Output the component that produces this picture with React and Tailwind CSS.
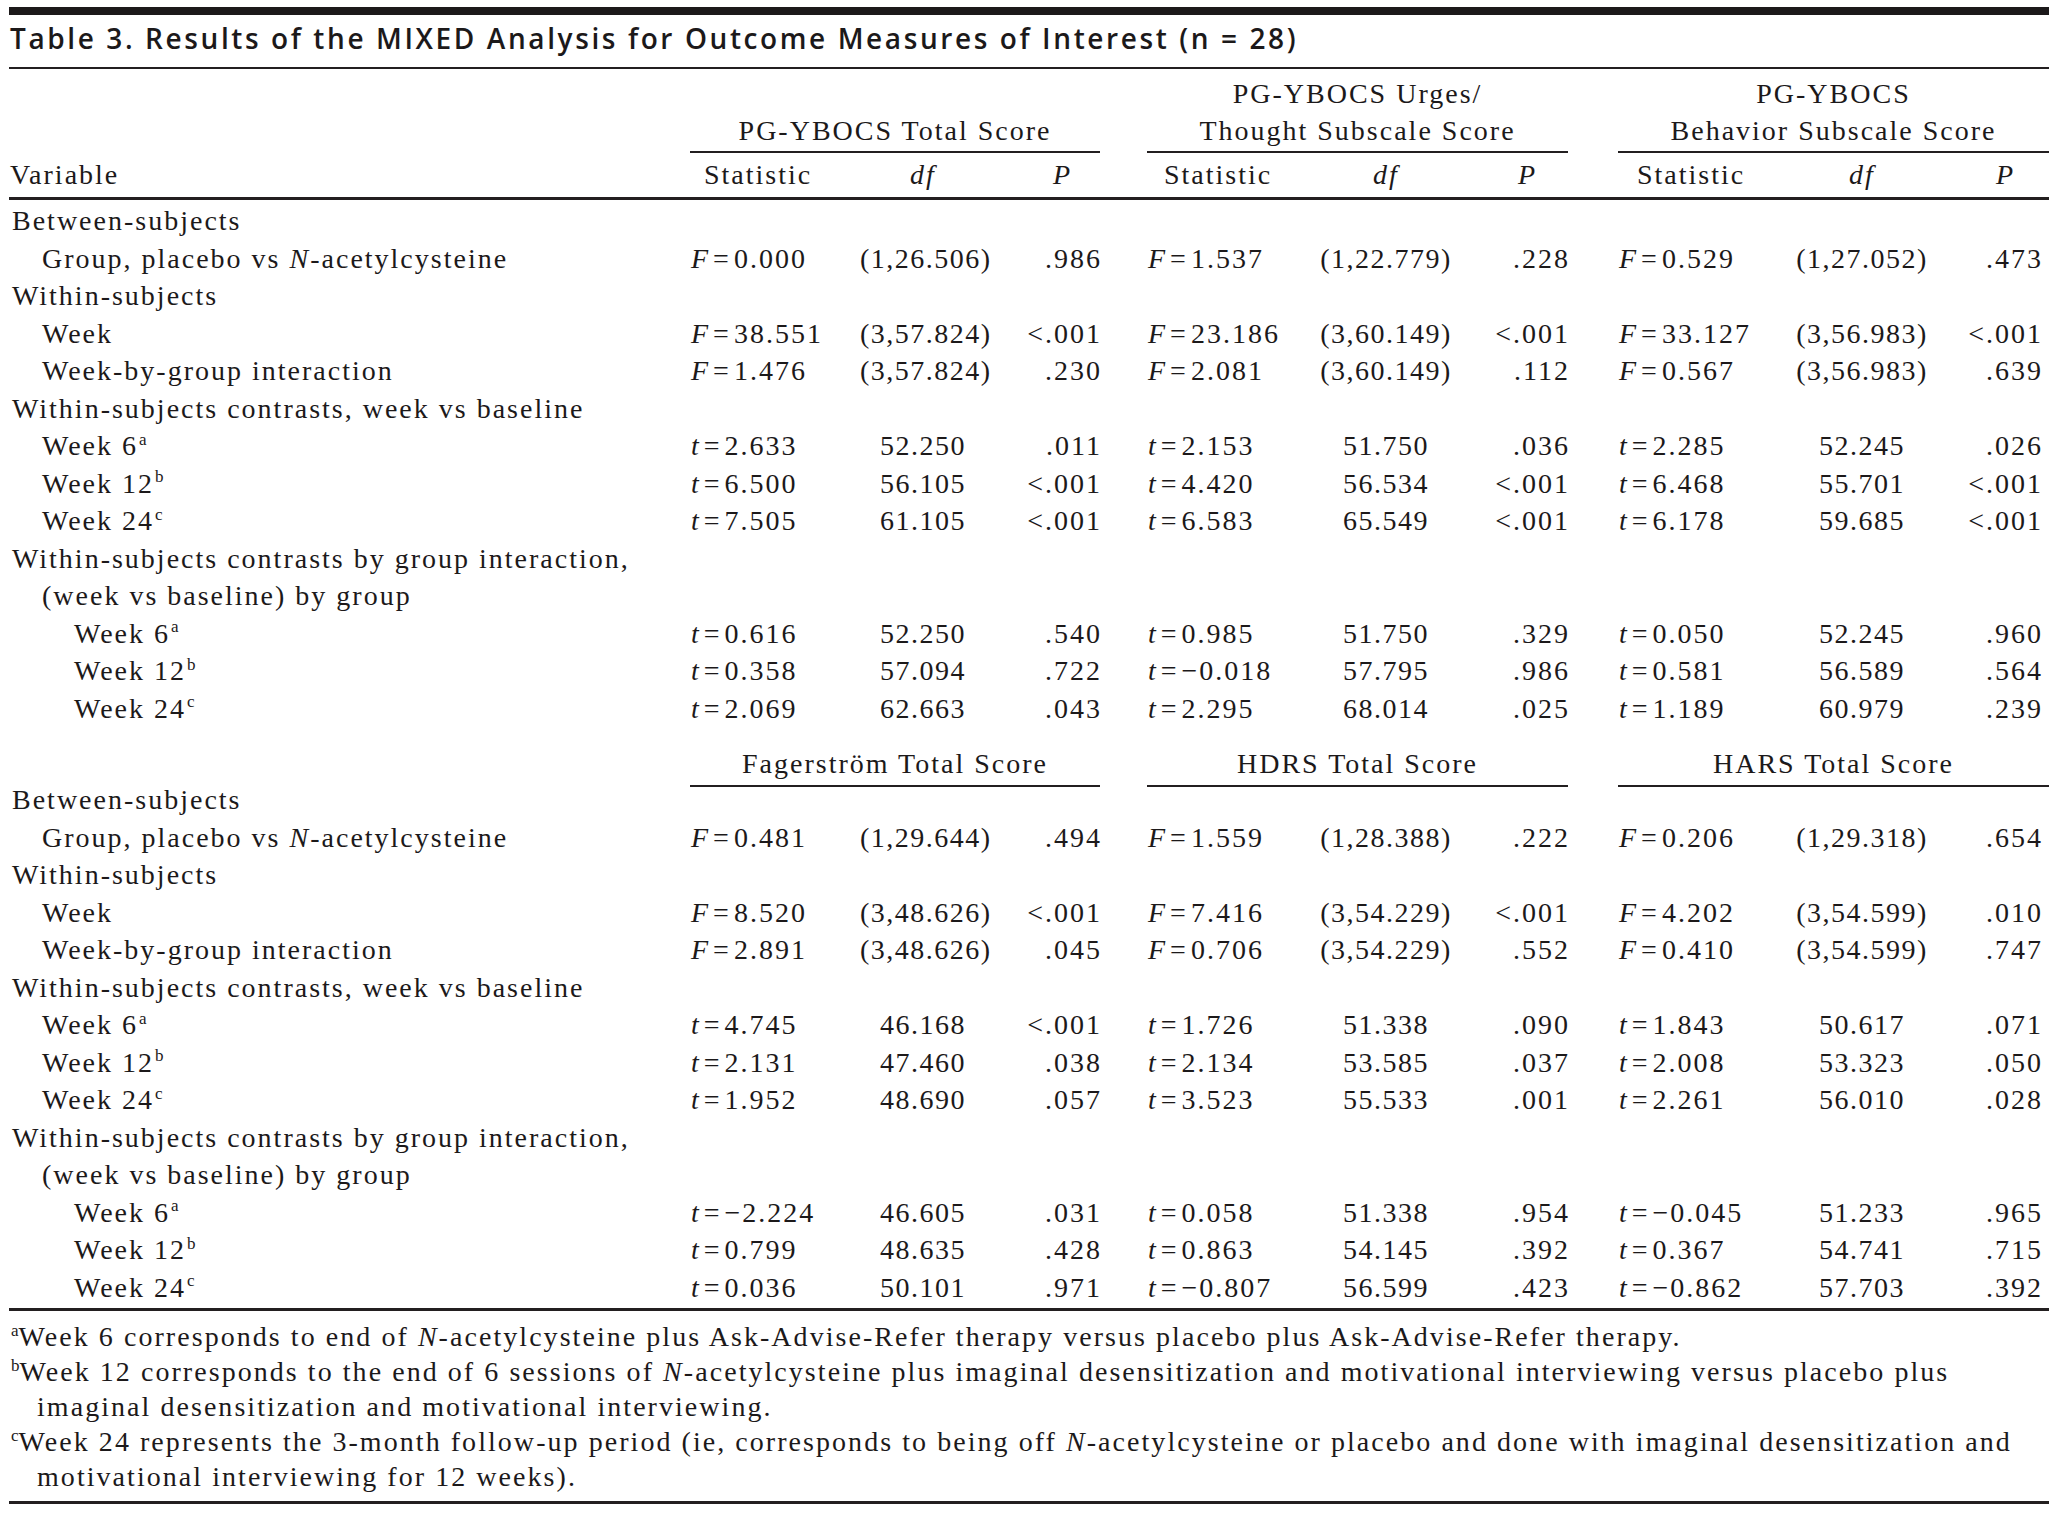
import React from "react";

const COLS =
  "grid grid-cols-[681px_170px_126px_114px_47px_173px_132px_116px_50px_178px_132px_113px_8px]";
const STARTS = ["col-start-2", "col-start-6", "col-start-10"];
const INDENT = ["pl-[3px]", "pl-[33px]", "pl-[65px]"];

const Sup = ({ children }) => (
  <sup className="text-[17px] top-[-0.6em] ml-[1px] tracking-normal">{children}</sup>
);

const part1 = {
  group: [["F", "0.000", "(1,26.506)", ".986"], ["F", "1.537", "(1,22.779)", ".228"], ["F", "0.529", "(1,27.052)", ".473"]],
  week: [["F", "38.551", "(3,57.824)", "<.001"], ["F", "23.186", "(3,60.149)", "<.001"], ["F", "33.127", "(3,56.983)", "<.001"]],
  wbg: [["F", "1.476", "(3,57.824)", ".230"], ["F", "2.081", "(3,60.149)", ".112"], ["F", "0.567", "(3,56.983)", ".639"]],
  c6: [["t", "2.633", "52.250", ".011"], ["t", "2.153", "51.750", ".036"], ["t", "2.285", "52.245", ".026"]],
  c12: [["t", "6.500", "56.105", "<.001"], ["t", "4.420", "56.534", "<.001"], ["t", "6.468", "55.701", "<.001"]],
  c24: [["t", "7.505", "61.105", "<.001"], ["t", "6.583", "65.549", "<.001"], ["t", "6.178", "59.685", "<.001"]],
  g6: [["t", "0.616", "52.250", ".540"], ["t", "0.985", "51.750", ".329"], ["t", "0.050", "52.245", ".960"]],
  g12: [["t", "0.358", "57.094", ".722"], ["t", "\u22120.018", "57.795", ".986"], ["t", "0.581", "56.589", ".564"]],
  g24: [["t", "2.069", "62.663", ".043"], ["t", "2.295", "68.014", ".025"], ["t", "1.189", "60.979", ".239"]],
};

const part2 = {
  group: [["F", "0.481", "(1,29.644)", ".494"], ["F", "1.559", "(1,28.388)", ".222"], ["F", "0.206", "(1,29.318)", ".654"]],
  week: [["F", "8.520", "(3,48.626)", "<.001"], ["F", "7.416", "(3,54.229)", "<.001"], ["F", "4.202", "(3,54.599)", ".010"]],
  wbg: [["F", "2.891", "(3,48.626)", ".045"], ["F", "0.706", "(3,54.229)", ".552"], ["F", "0.410", "(3,54.599)", ".747"]],
  c6: [["t", "4.745", "46.168", "<.001"], ["t", "1.726", "51.338", ".090"], ["t", "1.843", "50.617", ".071"]],
  c12: [["t", "2.131", "47.460", ".038"], ["t", "2.134", "53.585", ".037"], ["t", "2.008", "53.323", ".050"]],
  c24: [["t", "1.952", "48.690", ".057"], ["t", "3.523", "55.533", ".001"], ["t", "2.261", "56.010", ".028"]],
  g6: [["t", "\u22122.224", "46.605", ".031"], ["t", "0.058", "51.338", ".954"], ["t", "\u22120.045", "51.233", ".965"]],
  g12: [["t", "0.799", "48.635", ".428"], ["t", "0.863", "54.145", ".392"], ["t", "0.367", "54.741", ".715"]],
  g24: [["t", "0.036", "50.101", ".971"], ["t", "\u22120.807", "56.599", ".423"], ["t", "\u22120.862", "57.703", ".392"]],
};

const rowsFor = (d) => [
  { label: "Between-subjects", lvl: 0 },
  { label: <>Group, placebo vs <i>N</i>-acetylcysteine</>, lvl: 1, vals: d.group },
  { label: "Within-subjects", lvl: 0 },
  { label: "Week", lvl: 1, vals: d.week },
  { label: "Week-by-group interaction", lvl: 1, vals: d.wbg },
  { label: "Within-subjects contrasts, week vs baseline", lvl: 0 },
  { label: <>Week 6<Sup>a</Sup></>, lvl: 1, vals: d.c6 },
  { label: <>Week 12<Sup>b</Sup></>, lvl: 1, vals: d.c12 },
  { label: <>Week 24<Sup>c</Sup></>, lvl: 1, vals: d.c24 },
  { label: "Within-subjects contrasts by group interaction,", lvl: 0 },
  { label: "(week vs baseline) by group", lvl: 1 },
  { label: <>Week 6<Sup>a</Sup></>, lvl: 2, vals: d.g6 },
  { label: <>Week 12<Sup>b</Sup></>, lvl: 2, vals: d.g12 },
  { label: <>Week 24<Sup>c</Sup></>, lvl: 2, vals: d.g24 },
];

const DataRow = ({ row }) => (
  <div className={`${COLS} h-[37.5px] leading-[37.5px]`}>
    <div className={`${INDENT[row.lvl]} whitespace-nowrap`}>{row.label}</div>
    {row.vals &&
      row.vals.map((v, i) => (
        <React.Fragment key={i}>
          <div className={`${STARTS[i]} pl-[1px] whitespace-nowrap`}>
            <i>{v[0]}</i>
            <span className="mx-[3px]">=</span>
            {v[1]}
          </div>
          <div className="text-center tracking-[1.5px] whitespace-nowrap">{v[2]}</div>
          <div className="text-right -mr-[2px] whitespace-nowrap">{v[3]}</div>
        </React.Fragment>
      ))}
  </div>
);

export default function App() {
  return (
    <div className="w-[2058px] min-h-[1516px] bg-white text-[#1c191a] font-['Liberation_Serif','Times_New_Roman',serif] text-[28px] tracking-[2px]">
      <div className="ml-[9px] w-[2040px] pt-[7px]">
        <div className="h-[8px] bg-[#1c191a]" />
        <div className="h-[54px] leading-[47px] pl-[1px] border-b-2 border-[#231f20] font-['Open_Sans',sans-serif] font-semibold text-[28px] tracking-[2.6px] whitespace-nowrap">
          Table 3. Results of the MIXED Analysis for Outcome Measures of Interest (n = 28)
        </div>

        {/* header: measures, part 1 */}
        <div className={`${COLS} h-[84px]`}>
          <div className="col-start-2 col-span-3 flex flex-col justify-end items-center border-b-2 border-[#231f20] pb-[2px] leading-[37px] whitespace-nowrap">
            PG-YBOCS Total Score
          </div>
          <div className="col-start-6 col-span-3 flex flex-col justify-end items-center border-b-2 border-[#231f20] pb-[2px] leading-[37px] whitespace-nowrap">
            <span>PG-YBOCS Urges/</span>
            <span>Thought Subscale Score</span>
          </div>
          <div className="col-start-10 col-span-4 flex flex-col justify-end items-center border-b-2 border-[#231f20] pb-[2px] leading-[37px] whitespace-nowrap">
            <span>PG-YBOCS</span>
            <span>Behavior Subscale Score</span>
          </div>
        </div>

        <div className={`${COLS} h-[47px] leading-[44px] border-b-[3px] border-[#231f20]`}>
          <div className="pl-[1px]">Variable</div>
          <div className="pl-[14px]">Statistic</div>
          <div className="text-center"><i>df</i></div>
          <div className="text-right pr-[28px]"><i>P</i></div>
          <div className="col-start-6 pl-[17px]">Statistic</div>
          <div className="text-center"><i>df</i></div>
          <div className="text-right pr-[31px]"><i>P</i></div>
          <div className="col-start-10 pl-[19px]">Statistic</div>
          <div className="text-center"><i>df</i></div>
          <div className="text-right pr-[26px]"><i>P</i></div>
        </div>

        <div className="pt-[2px]">
          {rowsFor(part1).map((r, i) => (
            <DataRow key={i} row={r} />
          ))}
        </div>

        {/* header: measures, part 2 */}
        <div className={`${COLS} h-[60px]`}>
          <div className="col-start-2 col-span-3 flex flex-col justify-end items-center border-b-2 border-[#231f20] pb-[3px] leading-[37px] whitespace-nowrap">
            Fagerström Total Score
          </div>
          <div className="col-start-6 col-span-3 flex flex-col justify-end items-center border-b-2 border-[#231f20] pb-[3px] leading-[37px] whitespace-nowrap">
            HDRS Total Score
          </div>
          <div className="col-start-10 col-span-4 flex flex-col justify-end items-center border-b-2 border-[#231f20] pb-[3px] leading-[37px] whitespace-nowrap">
            HARS Total Score
          </div>
        </div>

        <div className="-mt-[6px] pb-[2px] border-b-[3px] border-[#231f20]">
          {rowsFor(part2).map((r, i) => (
            <DataRow key={i} row={r} />
          ))}
        </div>

        <div className="pt-[8px] pb-[7px] border-b-[3px] border-[#231f20] leading-[35px] tracking-[2.05px] whitespace-nowrap">
          <div className="pl-[1px]">
            <Sup>a</Sup>Week 6 corresponds to end of <i>N</i>-acetylcysteine plus Ask-Advise-Refer therapy versus placebo plus Ask-Advise-Refer therapy.
          </div>
          <div className="pl-[1px]">
            <Sup>b</Sup>Week 12 corresponds to the end of 6 sessions of <i>N</i>-acetylcysteine plus imaginal desensitization and motivational interviewing versus placebo plus
          </div>
          <div className="pl-[28px]">imaginal desensitization and motivational interviewing.</div>
          <div className="pl-[1px]">
            <Sup>c</Sup>Week 24 represents the 3-month follow-up period (ie, corresponds to being off <i>N</i>-acetylcysteine or placebo and done with imaginal desensitization and
          </div>
          <div className="pl-[28px]">motivational interviewing for 12 weeks).</div>
        </div>
      </div>
    </div>
  );
}
